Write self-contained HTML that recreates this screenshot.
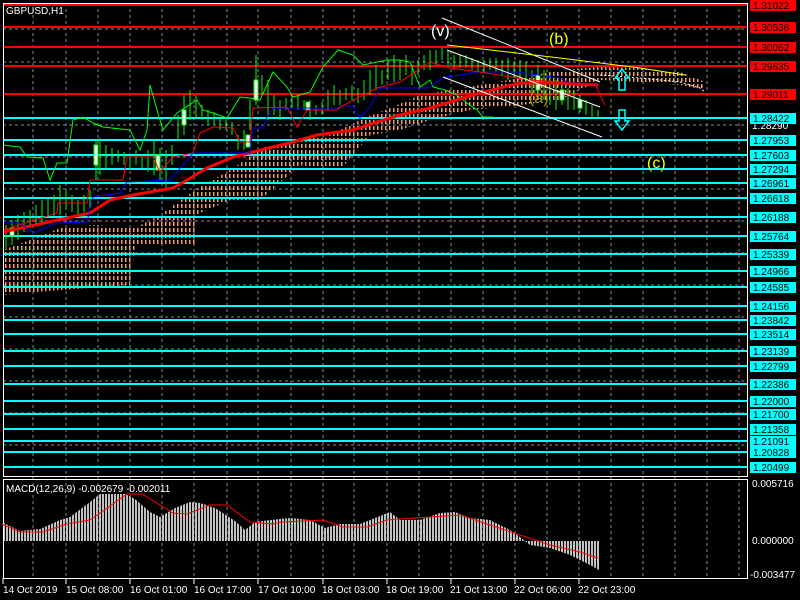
<!DOCTYPE html>
<html><head><meta charset="utf-8"><style>
html,body{margin:0;padding:0;background:#000;width:800px;height:600px;overflow:hidden}
svg{display:block}
text{font-family:"Liberation Sans",sans-serif}
</style></head><body>
<svg width="800" height="600" viewBox="0 0 800 600" xmlns="http://www.w3.org/2000/svg" font-size="10">
<defs>
<pattern id="cloud" width="4" height="6" patternUnits="userSpaceOnUse"><rect x="1" y="0" width="1.5" height="4" fill="#f4a060"/></pattern>
<pattern id="hist" width="3" height="10" patternUnits="userSpaceOnUse"><rect x="0" y="0" width="2" height="10" fill="#c0c0c0"/></pattern>
</defs>
<rect width="800" height="600" fill="#000"/>
<g stroke="#778899" stroke-width="1" stroke-dasharray="3,3">
<path d="M33 3V578M66 3V578M98 3V578M130 3V578M162 3V578M194 3V578M227 3V578M258 3V578M291 3V578M323 3V578M354 3V578M387 3V578M419 3V578M451 3V578M483 3V578M515 3V578M547 3V578M579 3V578M611 3V578M643 3V578M675 3V578M707 3V578M739 3V578"/>
<path d="M3 29H747M3 62H747M3 125H747M3 157H747M3 189H747M3 221H747M3 253H747M3 285H747M3 317H747M3 349H747M3 381H747M3 413H747M3 445H747"/>
</g>
<polygon fill="url(#cloud)" points="3,250 30,240 60,228 95,225 135,228 160,215 195,190 230,170 265,147 300,140 330,135 360,120 390,108 420,95 450,90 480,85 520,78 560,70 600,67 640,68 680,72 705,82 705,90 680,85 640,82 600,80 560,100 520,105 470,110 430,120 400,130 370,135 340,170 300,165 260,200 230,200 195,215 195,245 135,245 130,285 60,290 3,295"/>
<g stroke="#ff0000" stroke-width="2"><path d="M3 5H747M3 27H747M3 47H747M3 66H747M3 94H747"/></g>
<g stroke="#00ffff" stroke-width="2"><path d="M3 118H747M3 140H747M3 155H747M3 169H747M3 183H747M3 198H747M3 217H747M3 236H747M3 254H747M3 271H747M3 287H747M3 306H747M3 320H747M3 334H747M3 351H747M3 366H747M3 384H747M3 401H747M3 414H747M3 429H747M3 441H747M3 452H747M3 467H747"/></g>
<polyline fill="none" stroke="#00ff00" stroke-width="1" points="3,145 20,147 27,157 43,158 50,180 57,163 67,163 73,120 83,117 93,123 103,127 130,130 140,150 147,130 150,85 157,110 163,130 177,113 197,100 203,110 213,113 227,118 240,97 250,98 260,100 273,72 287,87 293,97 310,92 323,67 338,50 353,55 363,65 387,60 400,60 410,62 420,87 430,80 433,87 445,90 457,95 467,103 477,110 483,117 493,117"/>
<g stroke="#00ff00" stroke-width="1">
<path d="M6 225V250M12 220V245M18 215V240M24 212V232M30 210V228M36 205V225M42 200V222M48 198V218M54 195V216M60 185V215M66 190V210M72 195V212M78 200V215M84 195V212M90 190V208M96 140V180M100 138V175M106 145V170M112 148V165M118 150V162M124 152V165M130 155V170M136 150V165M142 155V168M148 150V172M154 140V175M160 148V180M166 150V190M172 145V165M178 115V140M184 95V135M190 90V120M196 95V118M202 105V120M208 110V125M214 112V125M220 118V130M226 120V130M232 122V135M238 135V150M244 130V150M250 100V130M256 55V105M262 75V95M268 80V120M274 95V115M280 100V120M286 98V110M292 95V108M298 95V110M304 100V110M310 100V120M316 105V115M322 102V115M328 90V110M334 85V105M340 90V105M346 88V100M352 85V100M358 88V103M364 80V100M370 70V95M376 65V90M382 70V85M388 60V80M394 55V82M400 60V80M406 55V75M412 65V85M418 60V75M424 55V70M430 50V70M436 50V65M442 48V60M448 50V65M454 55V70M460 55V68M466 55V68M472 58V70M478 60V72M484 60V72M490 58V70M496 58V72M502 60V75M508 58V80M514 62V78M520 60V80M526 62V85M532 70V95M538 65V95M544 70V100M550 75V105M556 80V110M562 85V105M568 88V110M574 90V110M580 95V112M586 100V115M592 105V118M598 110V118"/>
</g>
<g fill="#ffffff" stroke="#00ff00" stroke-width="1">
<rect x="94" y="145" width="4" height="20"/><rect x="246" y="135" width="4" height="12"/><rect x="254" y="80" width="4" height="20"/><rect x="182" y="110" width="4" height="15"/><rect x="156" y="155" width="4" height="15"/><rect x="536" y="75" width="4" height="15"/><rect x="560" y="90" width="4" height="10"/><rect x="578" y="100" width="4" height="8"/><rect x="10" y="228" width="4" height="8"/><rect x="306" y="102" width="4" height="8"/>
</g>
<polyline fill="none" stroke="#ff0000" stroke-width="3" points="3,232 90,213 110,200 133,195 173,188 187,180 207,168 233,157 253,152 293,142 317,135 353,130 377,122 400,115 430,108 480,93 520,83 560,83 598,85"/>
<polyline fill="none" stroke="#0000ff" stroke-width="1" points="3,223 20,223 33,233 57,223 87,222 93,197 120,193 127,182 170,180 193,153 250,153 253,128 263,128 267,117 273,108 337,108 343,106 353,106 360,118 370,107 380,88 427,88 443,78 477,72 517,72 560,78 567,82 597,85"/>
<polyline fill="none" stroke="#ff0000" stroke-width="1" points="3,230 57,213 58,203 87,203 90,180 123,180 127,157 153,157 160,172 173,157 193,153 200,133 213,127 233,128 240,142 250,142 253,108 287,107 297,127 307,110 337,110 340,107 377,88 400,82 430,62 450,68 480,72 530,80 560,82 596,85 600,95 605,105"/>
<g stroke="#ffffff" stroke-width="1"><path d="M442 18L600 82M447 50L600 107M443 77L602 137"/></g>
<polyline fill="none" stroke="#ffff00" stroke-width="1" points="447,45 560,58 640,68 685,75"/>
<polyline fill="none" stroke="#ffffff" stroke-width="1" stroke-dasharray="2,2" points="600,75 640,78 680,82 700,88 705,92"/>
<text x="431" y="36" fill="#ffffff" font-size="16">(v)</text>
<text x="549" y="44" fill="#ffff00" font-size="16">(b)</text>
<text x="529" y="103" fill="#9a9a00" font-size="16">(a)</text>
<text x="647" y="168" fill="#ffff00" font-size="16">(c)</text>
<path d="M622 69L615 78H619V90H625V78H629Z" fill="none" stroke="#00ffff" stroke-width="1.5"/>
<path d="M622 130L615 121H619V110H625V121H629Z" fill="none" stroke="#00ffff" stroke-width="1.5"/>
<text x="6" y="14" fill="#ffffff">GBPUSD,H1</text>
<rect x="3.5" y="3.5" width="744" height="473" fill="none" stroke="#ffffff"/>
<rect x="3.5" y="479.5" width="744" height="99" fill="none" stroke="#ffffff"/>
<polygon fill="url(#hist)" points="4,541 4,523 20,531 40,529 60,520 70,517 90,502 100,494 125,494 135,499 150,512 160,517 175,508 190,502 200,503 215,508 235,521 245,530 255,522 270,520 290,518 310,520 325,528 340,524 360,524 380,516 390,512 400,520 420,520 440,513 455,512 470,518 490,520 510,530 520,537 525,541 530,545 550,548 570,555 590,565 599,570 599,541"/>
<polyline fill="none" stroke="#ff0000" stroke-width="1" points="2,524 20,532 43,532 67,524 90,520 103,511 127,494 142,494 173,513 187,514 210,505 227,505 250,522 273,524 283,522 323,520 343,527 367,527 387,520 400,519 430,517 460,515 490,525 520,535 550,545 580,552 598,558"/>
<text x="6" y="492" fill="#ffffff">MACD(12,26,9) -0.002679 -0.002011</text>
<text x="752" y="487" fill="#fff">0.005716</text>
<text x="752" y="544" fill="#fff">0.000000</text>
<text x="750" y="578" fill="#fff">-0.003477</text>
<text x="752" y="71" fill="#fff">1.29759</text>
<text x="752" y="129" fill="#fff">1.28290</text>
<g fill="#ff0000"><rect x="750" y="0" width="46" height="11"/><rect x="750" y="22" width="46" height="11"/><rect x="750" y="42" width="46" height="11"/><rect x="750" y="61" width="46" height="11"/><rect x="750" y="89" width="46" height="11"/></g>
<g fill="#00ffff"><rect x="750" y="113" width="46" height="11"/><rect x="750" y="135" width="46" height="11"/><rect x="750" y="150" width="46" height="11"/><rect x="750" y="164" width="46" height="11"/><rect x="750" y="178" width="46" height="11"/><rect x="750" y="193" width="46" height="11"/><rect x="750" y="212" width="46" height="11"/><rect x="750" y="231" width="46" height="11"/><rect x="750" y="249" width="46" height="11"/><rect x="750" y="266" width="46" height="11"/><rect x="750" y="282" width="46" height="11"/><rect x="750" y="301" width="46" height="11"/><rect x="750" y="315" width="46" height="11"/><rect x="750" y="329" width="46" height="11"/><rect x="750" y="346" width="46" height="11"/><rect x="750" y="361" width="46" height="11"/><rect x="750" y="379" width="46" height="11"/><rect x="750" y="396" width="46" height="11"/><rect x="750" y="409" width="46" height="11"/><rect x="750" y="424" width="46" height="11"/><rect x="750" y="436" width="46" height="11"/><rect x="750" y="447" width="46" height="11"/><rect x="750" y="462" width="46" height="11"/></g>
<g fill="#000">
<text x="753" y="9">1.31022</text><text x="753" y="31">1.30536</text><text x="753" y="51">1.30062</text><text x="753" y="70">1.29635</text><text x="753" y="98">1.29011</text>
<text x="753" y="122">1.28422</text><text x="753" y="144">1.27953</text><text x="753" y="159">1.27603</text><text x="753" y="173">1.27294</text><text x="753" y="187">1.26961</text><text x="753" y="202">1.26618</text><text x="753" y="221">1.26188</text><text x="753" y="240">1.25764</text><text x="753" y="258">1.25339</text><text x="753" y="275">1.24966</text><text x="753" y="291">1.24585</text><text x="753" y="310">1.24156</text><text x="753" y="324">1.23842</text><text x="753" y="338">1.23514</text><text x="753" y="355">1.23139</text><text x="753" y="370">1.22799</text><text x="753" y="388">1.22386</text><text x="753" y="405">1.22000</text><text x="753" y="418">1.21700</text><text x="753" y="433">1.21358</text><text x="753" y="445">1.21091</text><text x="753" y="456">1.20828</text><text x="753" y="471">1.20499</text>
</g>
<g stroke="#fff"><path d="M3 578V584M66 578V584M130 578V584M194 578V584M258 578V584M323 578V584M387 578V584M451 578V584M515 578V584M579 578V584"/></g>
<g fill="#fff">
<text x="3" y="593">14 Oct 2019</text><text x="66" y="593">15 Oct 08:00</text><text x="130" y="593">16 Oct 01:00</text><text x="194" y="593">16 Oct 17:00</text><text x="258" y="593">17 Oct 10:00</text><text x="322" y="593">18 Oct 03:00</text><text x="386" y="593">18 Oct 19:00</text><text x="450" y="593">21 Oct 13:00</text><text x="514" y="593">22 Oct 06:00</text><text x="578" y="593">22 Oct 23:00</text>
</g>
</svg>
</body></html>
